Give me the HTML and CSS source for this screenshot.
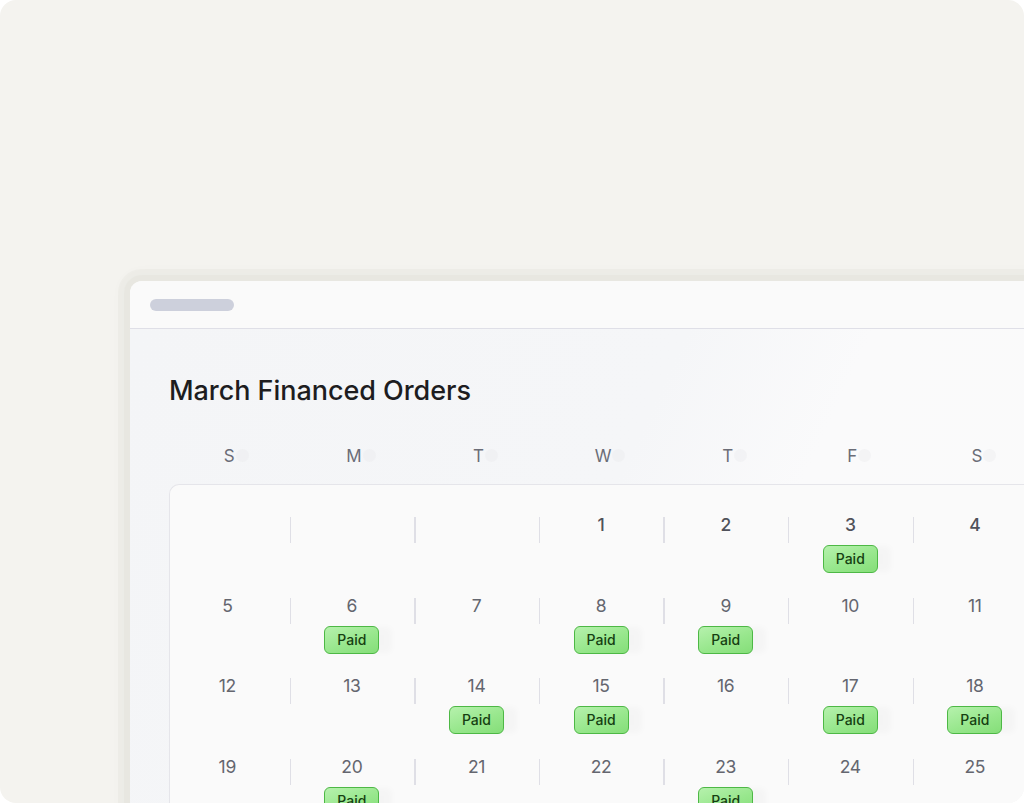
FILE: index.html
```html
<!DOCTYPE html>
<html lang="en">
<head>
<meta charset="utf-8">
<title>March Financed Orders</title>
<link rel="stylesheet" href="styles.css">
</head>
<body>
<div class="stage">
  <div class="window">
    <div class="topbar"><span class="pill"></span></div>
    <div class="content">
      <h1 class="title">March Financed Orders</h1>
      <div class="weekdays">
        <div class="wd">S</div><div class="wd">M</div><div class="wd">T</div><div class="wd">W</div><div class="wd">T</div><div class="wd">F</div><div class="wd">S</div>
      </div>
      <div class="cal">
        <div class="grid">
          <div class="cell first"></div>
          <div class="cell"></div>
          <div class="cell"></div>
          <div class="cell strong"><span class="num">1</span></div>
          <div class="cell strong"><span class="num">2</span></div>
          <div class="cell strong"><span class="num">3</span><span class="paid">Paid</span></div>
          <div class="cell strong"><span class="num">4</span></div>

          <div class="cell first"><span class="num">5</span></div>
          <div class="cell"><span class="num">6</span><span class="paid">Paid</span></div>
          <div class="cell"><span class="num">7</span></div>
          <div class="cell"><span class="num">8</span><span class="paid">Paid</span></div>
          <div class="cell"><span class="num">9</span><span class="paid">Paid</span></div>
          <div class="cell"><span class="num">10</span></div>
          <div class="cell"><span class="num">11</span></div>

          <div class="cell first"><span class="num">12</span></div>
          <div class="cell"><span class="num">13</span></div>
          <div class="cell"><span class="num">14</span><span class="paid">Paid</span></div>
          <div class="cell"><span class="num">15</span><span class="paid">Paid</span></div>
          <div class="cell"><span class="num">16</span></div>
          <div class="cell"><span class="num">17</span><span class="paid">Paid</span></div>
          <div class="cell"><span class="num">18</span><span class="paid">Paid</span></div>

          <div class="cell first"><span class="num">19</span></div>
          <div class="cell"><span class="num">20</span><span class="paid">Paid</span></div>
          <div class="cell"><span class="num">21</span></div>
          <div class="cell"><span class="num">22</span></div>
          <div class="cell"><span class="num">23</span><span class="paid">Paid</span></div>
          <div class="cell"><span class="num">24</span></div>
          <div class="cell"><span class="num">25</span></div>
        </div>
      </div>
    </div>
  </div>
</div>
</body>
</html>
```
FILE: styles.css
```css
* { box-sizing: border-box; }
html, body { margin: 0; padding: 0; background: #ffffff; }
body { font-family: Inter, "Noto Sans", "Liberation Sans", sans-serif; }

.stage {
  width: 1024px;
  height: 803px;
  background: #f4f3ef;
  border-radius: 16px;
  overflow: hidden;
  padding: 281px 0 0 130px;
}

.window {
  width: 920px;
  height: 560px;
  background: #fafafa;
  border-radius: 12px 12px 0 0;
  box-shadow: 0 0 0 6px rgba(225, 223, 215, 0.35), 0 0 0 12px rgba(225, 223, 215, 0.25), 0 0 14px 10px rgba(0, 0, 0, 0.02);
}

.topbar {
  height: 48px;
  border-bottom: 1.5px solid #dfdfe7;
  padding: 18px 0 0 20px;
  background: #fafafa;
  border-radius: 12px 12px 0 0;
}
.pill {
  display: block;
  width: 84px;
  height: 12px;
  border-radius: 6px;
  background: #cdd0dc;
}

.content {
  height: 520px;
  padding: 45px 0 0 39px;
  background: linear-gradient(115deg, #f4f5f7 0%, #f5f6f8 48%, #fafafb 64%, #fafafa 100%);
}

.title {
  margin: 0;
  font-size: 27px;
  line-height: 34px;
  font-weight: 500;
  color: #1d1d1f;
  letter-spacing: -0.05px;
}

.weekdays {
  display: grid;
  grid-template-columns: repeat(7, 124.6px);
  margin: 37px 0 0 -2px;
  height: 27px;
}
.wd {
  text-align: center;
  font-size: 17px;
  line-height: 22px;
  color: #6b6d77;
  position: relative;
}
.wd::after {
  content: "";
  position: absolute;
  top: 4px;
  margin-left: 1px;
  width: 13px;
  height: 13px;
  border-radius: 50%;
  background: rgba(232, 232, 234, 0.35);
}

.cal {
  margin-top: 12px;
  width: 900px;
  height: 400px;
  background: #fafafa;
  border: 1.5px solid #e5e5ea;
  border-right: none;
  border-radius: 10px 0 0 0;
  padding-top: 30px;
}

.grid {
  display: grid;
  grid-template-columns: repeat(7, 124.6px);
  grid-auto-rows: 80.6px;
  margin-left: -5px;
}
.cell {
  position: relative;
  display: flex;
  flex-direction: column;
  align-items: center;
}
.cell::before {
  content: "";
  position: absolute;
  left: 0;
  top: 2px;
  width: 1.5px;
  height: 26px;
  background: #dfdfe6;
}
.cell.first::before { display: none; }

.num {
  font-size: 17.5px;
  line-height: 20px;
  color: #64666f;
  letter-spacing: -0.3px;
}
.strong .num { font-weight: 500; color: #50525a; }

.paid {
  margin-top: 10px;
  width: 55px;
  height: 28px;
  border: 1.5px solid #4db845;
  border-radius: 6px;
  background: linear-gradient(160deg, #b6f1ad 0%, #98e78d 55%, #85de79 100%);
  color: #163f12;
  font-size: 14px;
  font-weight: 500;
  line-height: 25px;
  text-align: center;
  box-shadow: 14px 0 6px -1px rgba(0, 0, 0, 0.025);
}
```
